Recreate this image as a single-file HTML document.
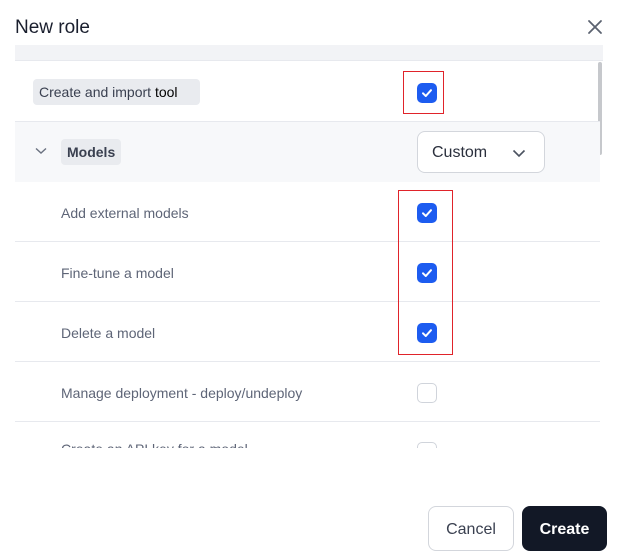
<!DOCTYPE html>
<html><head><style>
*{box-sizing:border-box;margin:0;padding:0}
body{width:618px;height:560px;background:#fff;font-family:"Liberation Sans",sans-serif;position:relative;overflow:hidden}
.abs{position:absolute}
.cb{position:absolute;left:417px;width:20px;height:20px;border-radius:5px;background:#1d5cf0}
.cb svg{position:absolute;left:4px;top:4px}
.ucb{position:absolute;left:417px;width:20px;height:20px;border-radius:5px;border:1.5px solid #d0d4db;background:#fff}
.row{position:absolute;left:15px;width:585px;height:60px;border-bottom:1px solid #e7e9ee}
.lbl{position:absolute;left:61px;font-size:14px;color:#5e6577}
</style></head><body>
<div class="abs" style="left:15px;top:17px;font-size:19px;color:#1a1f2e">New role</div>
<svg class="abs" style="left:587px;top:19px" width="16" height="16" viewBox="0 0 16 16"><path d="M2 2L14 14M14 2L2 14" stroke="#5b6270" stroke-width="1.8" stroke-linecap="round"/></svg>
<div class="abs" style="left:0;top:45px;width:618px;height:403px;overflow:hidden">
 <div class="abs" style="left:15px;top:0;width:588px;height:16px;background:#f2f3f6;border-bottom:1px solid #e7e9ee"></div>
 <div class="abs" style="left:598px;top:17px;width:4px;height:93px;background:#c6c8cc;border-radius:2px"></div>
 <div class="row" style="top:17px;height:60px"></div>
 <div class="abs" style="left:33px;top:34px;width:167px;height:26px;background:#e9ebef;border-radius:4px;font-size:14px;color:#3a4050;padding:5px 6px;font-weight:500">Create and import <span style="color:#000">tool</span></div>
 <div class="cb" style="top:38px"><svg width="12" height="12" viewBox="0 0 12 12"><path d="M2 6.3L4.8 9L10 3.2" fill="none" stroke="#fff" stroke-width="2" stroke-linecap="round" stroke-linejoin="round"/></svg></div>
 <div class="abs" style="left:403px;top:26px;width:41px;height:43px;border:1px solid #e0232a"></div>
 <div class="abs" style="left:15px;top:77px;width:585px;height:60px;background:#f7f8fa"></div>
 <svg class="abs" style="left:35px;top:102px" width="12" height="8" viewBox="0 0 12 8"><path d="M1 1.5L6 6L11 1.5" fill="none" stroke="#6b7280" stroke-width="1.4"/></svg>
 <div class="abs" style="left:61px;top:94px;width:60px;height:26px;background:#e9ebef;border-radius:4px;font-size:14px;color:#3a4050;padding:5px 6px;font-weight:bold">Models</div>
 <div class="abs" style="left:417px;top:86px;width:128px;height:42px;border:1px solid #d3d6dc;border-radius:8px;background:#fff;font-size:16px;color:#2a2f3c;padding:12px 14px">Custom</div>
 <svg class="abs" style="left:512px;top:104px" width="14" height="9" viewBox="0 0 14 9"><path d="M1.5 1.5L7 7L12.5 1.5" fill="none" stroke="#4b5260" stroke-width="1.6"/></svg>
 <div class="row" style="top:137px"></div><div class="lbl" style="top:160px">Add external models</div>
 <div class="cb" style="top:158px"><svg width="12" height="12" viewBox="0 0 12 12"><path d="M2 6.3L4.8 9L10 3.2" fill="none" stroke="#fff" stroke-width="2" stroke-linecap="round" stroke-linejoin="round"/></svg></div>
 <div class="row" style="top:197px"></div><div class="lbl" style="top:220px">Fine-tune a model</div>
 <div class="cb" style="top:218px"><svg width="12" height="12" viewBox="0 0 12 12"><path d="M2 6.3L4.8 9L10 3.2" fill="none" stroke="#fff" stroke-width="2" stroke-linecap="round" stroke-linejoin="round"/></svg></div>
 <div class="row" style="top:257px"></div><div class="lbl" style="top:280px">Delete a model</div>
 <div class="cb" style="top:278px"><svg width="12" height="12" viewBox="0 0 12 12"><path d="M2 6.3L4.8 9L10 3.2" fill="none" stroke="#fff" stroke-width="2" stroke-linecap="round" stroke-linejoin="round"/></svg></div>
 <div class="abs" style="left:398px;top:145px;width:55px;height:165px;border:1px solid #e0232a"></div>
 <div class="row" style="top:317px"></div><div class="lbl" style="top:340px">Manage deployment - deploy/undeploy</div>
 <div class="ucb" style="top:338px"></div>
 <div class="lbl" style="top:396px">Create an API key for a model</div>
 <div class="ucb" style="top:397px"></div>
</div>
<div class="abs" style="left:428px;top:506px;width:86px;height:45px;border:1px solid #d3d6dc;border-radius:8px;font-size:16px;color:#3a4050;text-align:center;line-height:46px">Cancel</div>
<div class="abs" style="left:522px;top:506px;width:85px;height:45px;background:#121826;border-radius:8px;font-size:16px;color:#fff;font-weight:bold;text-align:center;line-height:48px">Create</div>
</body></html>
